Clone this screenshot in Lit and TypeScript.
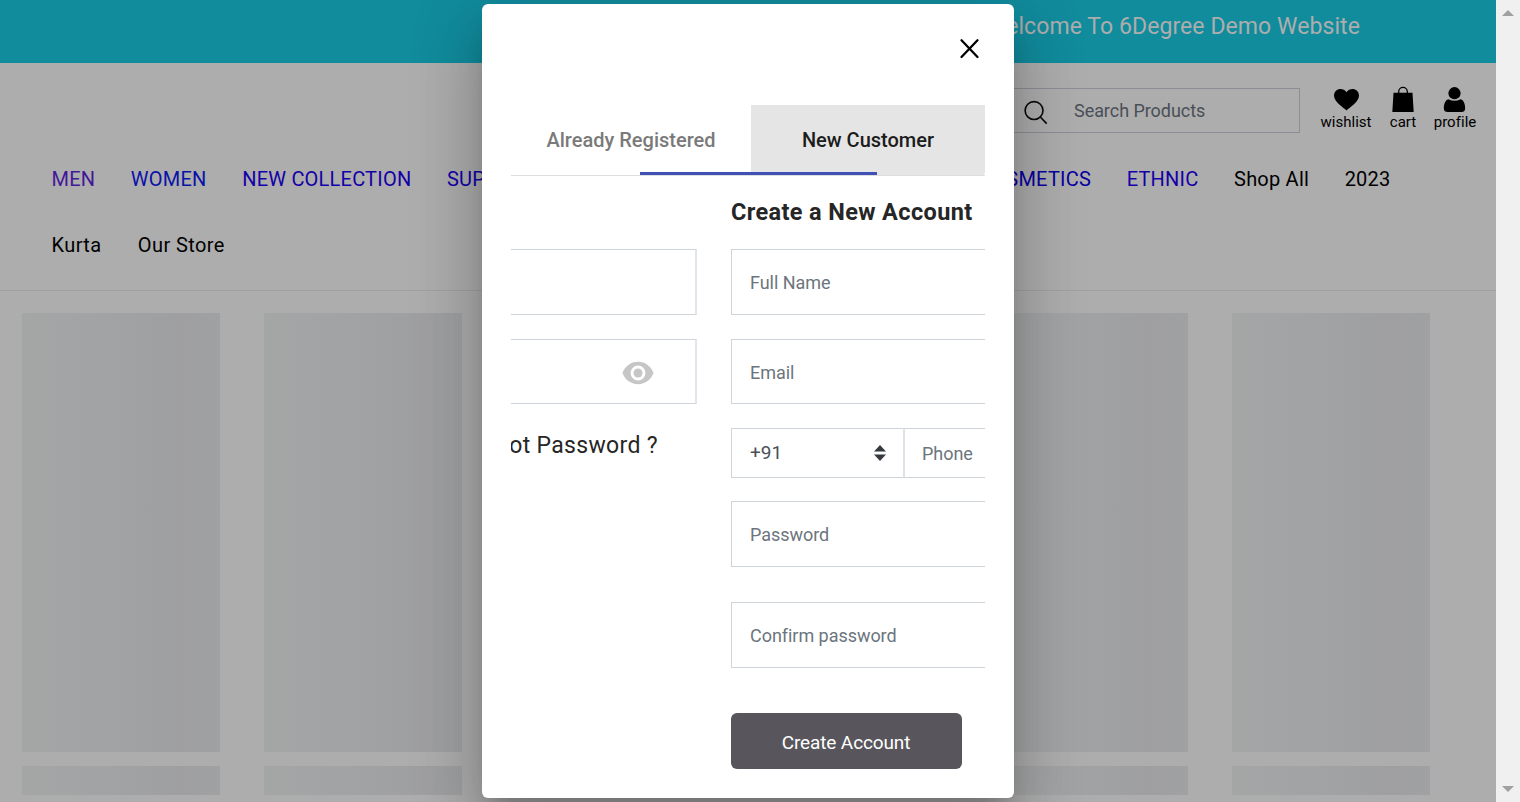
import { LitElement, html, css } from "lit";
import { customElement } from "lit/decorators.js";

@customElement("shop-header")
class ShopHeader extends LitElement {
  static styles = css`
    :host { display: block; }
    .promo { height: 63px; background: #118c9d; color: #adadad; box-sizing: border-box; padding: 11px 136px 0 0; text-align: right; font-size: 23px; line-height: 31px; letter-spacing: 0.08px; }
    .tools { height: 83px; display: flex; justify-content: flex-end; align-items: flex-start; padding-right: 20px; }
    .search { box-sizing: border-box; width: 400px; height: 45px; margin: 25px 20px 0 0; border: 1px solid #8b8e94; display: flex; align-items: center; padding-left: 122px; color: #4a4f57; font-size: 18px; letter-spacing: -0.05px; }
    .search svg { margin-right: 26px; margin-top: 3px; }
    .tool { display: flex; flex-direction: column; align-items: center; font-size: 15px; line-height: 18px; letter-spacing: 0.03px; color: #000; margin-top: 22px; }
    .wish { width: 52px; margin-right: 18px; }
    .cart { width: 26px; margin-right: 18px; }
    .user { width: 42px; }
    nav { height: 144px; border-bottom: 1px solid #a0a0a0; box-sizing: content-box; font-size: 20px; letter-spacing: 0.22px; line-height: 66px; color: #000; }
    .row { display: flex; height: 66px; padding: 0 105.500px 0 51.500px; white-space: nowrap; gap: 35.600px; }
    .push { margin-left: auto; }
    .visited { color: #421899; }
    .blue { color: #0a12a8; }
    .link { color: #1400a8; }
    .deep { color: #0800a0; }
    .plain { letter-spacing: 0.4px; gap: 36.300px; }
  `;
  render() {
    return html`
      <div class="promo">Welcome To 6Degree Demo Website</div>
      <div class="tools">
        <div class="search">
          <svg width="25" height="25" viewBox="0 0 26 26" fill="none" stroke="#0a0a0a" stroke-width="1.700"><circle cx="11.500" cy="11" r="9.300"/><path d="M18 17.700 24.600 24.500"/></svg>
          <span>Search Products</span>
        </div>
        <div class="tool wish">
          <svg width="28" height="28" viewBox="0 0 28 28"><path d="M14.500 25.500C12 23 2 17 2 10.800C2 3.200 11 1.800 14.500 7.200C18 1.800 27 3.200 27 10.800C27 17 17 23 14.500 25.500Z"/></svg>
          <span>wishlist</span>
        </div>
        <div class="tool cart">
          <svg width="26" height="28" viewBox="0 0 26 28"><path d="M3.500 7.800h19L23.700 27H2.300Z"/><path d="M8.700 9V6.700a4.300 4.300 0 0 1 8.600 0V9" fill="none" stroke="#000" stroke-width="1.300"/></svg>
          <span>cart</span>
        </div>
        <div class="tool user">
          <svg width="26" height="28" viewBox="0 0 26 28"><circle cx="12.500" cy="8.200" r="6.100"/><path d="M6.300 14.200Q12.500 17.200 18.700 14.200C22 15 23.500 20 23.100 24Q22.800 27 19.500 27H5.500Q2.200 27 1.900 24C1.500 20 3 15 6.300 14.200Z"/></svg>
          <span>profile</span>
        </div>
      </div>
      <nav>
        <div class="row">
          <span class="visited">MEN</span><span class="blue">WOMEN</span><span class="link">NEW COLLECTION</span><span class="link">SUPER</span>
          <span class="deep push">COSMETICS</span><span class="link">ETHNIC</span><span>Shop All</span><span>2023</span>
        </div>
        <div class="row plain"><span>Kurta</span><span>Our Store</span></div>
      </nav>
    `;
  }
}

@customElement("account-dialog")
class AccountDialog extends LitElement {
  static styles = css`
    :host { display: block; box-sizing: border-box; background: #fff; border-radius: 6px; padding: 0 29px; color: #262626;
      box-shadow: 0 16px 22px -10px rgba(0,0,0,.2), 0 36px 57px 4px rgba(0,0,0,.14), 0 14px 69px 12px rgba(0,0,0,.12); }
    .top { height: 101px; display: flex; justify-content: flex-end; box-sizing: border-box; padding: 34px 5px 0 0; }
    .tabs { height: 70px; display: grid; grid-template-columns: 240px 234px; border-bottom: 1px solid #dedede; font-size: 20px; font-weight: 500; letter-spacing: 0; position: relative; }
    .tab { display: flex; align-items: center; justify-content: center; color: #7a7a7a; }
    .on { background: #e5e5e5; color: #1c1c1c; border-radius: 0 0 3px 0; }
    .ink { position: absolute; left: 129px; bottom: 0; width: 237px; height: 3px; background: #3f51b5; }
    .body { display: grid; grid-template-columns: 186px 254px; column-gap: 34px; overflow: hidden; height: 610px; }
    .col { display: flex; flex-direction: column; min-width: 0; }
    .title { height: 73px; line-height: 73px; font-size: 23.500px; font-weight: 700; letter-spacing: 0.37px; white-space: nowrap; }
    .field { box-sizing: border-box; height: 66px; border: 1px solid #ced4da; border-right: 0; padding: 0 0 0 18px; display: flex; align-items: center; color: #6c757d; font-size: 18px; letter-spacing: -0.04px; margin-bottom: 24px; }
    .old { border-left: 0; border-right: 2px solid #e2e6ea; justify-content: flex-end; padding-right: 41px; }
    .mail { height: 65px; padding-top: 2px; }
    .phone { display: flex; height: 50px; margin-bottom: 23px; box-sizing: border-box; }
    .phone .field { height: 50px; margin: 0; }
    .phone .code { width: 172px; color: #495057; justify-content: space-between; padding: 0 17px 0 18px; font-size: 19px; }
    .code span { margin-top: -2px; }
    .phone .num { flex: 1; border-left: 2px solid #dee2e6; padding-left: 17px; }
    .pass { margin-bottom: 35px; }
    .confirm { margin-bottom: 45px; }
    .forgot { display: flex; justify-content: flex-end; padding: 1px 39px 0 0; font-size: 23px; line-height: 34px; letter-spacing: 0.33px; white-space: nowrap; }
    .create { width: 231px; height: 56px; border: 0; border-radius: 6px; background: #58565c; color: #fff; font: 19px Roboto, sans-serif; letter-spacing: -0.12px; padding: 3px 1px 0 0; }
  `;
  render() {
    return html`
      <div class="top"><svg width="22" height="22" viewBox="0 0 22 22" fill="none" stroke="#000" stroke-width="2.300" stroke-linecap="round"><path d="M3.500 2.300 19.500 19M19.500 2.300 3.500 19"/></svg></div>
      <div class="tabs"><div class="tab">Already Registered</div><div class="tab on">New Customer</div><div class="ink"></div></div>
      <div class="body">
        <div class="col">
          <div class="title"></div>
          <div class="field old"></div>
          <div class="field old mail"><svg width="32" height="24" viewBox="0 0 32 24"><path fill="#c6c6c6" fill-rule="evenodd" d="M16 .8C8.700.8 2.800 5.500.500 12 2.800 18.500 8.700 23.200 16 23.200S29.200 18.500 31.500 12C29.200 5.500 23.300.8 16 .8ZM16 4.600a7.400 7.400 0 1 1 0 14.800 7.400 7.400 0 0 1 0-14.800Z"/><circle cx="16" cy="12" r="4.500" fill="#c6c6c6"/></svg></div>
          <div class="forgot">ot Password ?</div>
        </div>
        <div class="col">
          <div class="title">Create a New Account</div>
          <div class="field">Full Name</div>
          <div class="field mail">Email</div>
          <div class="phone">
            <div class="field code"><span>+91</span><svg width="12" height="16" viewBox="0 0 12 16" fill="#343a40"><path d="M0 6.500 6 0l6 6.500ZM0 9.500 6 16l6-6.500Z"/></svg></div>
            <div class="field num">Phone</div>
          </div>
          <div class="field pass">Password</div>
          <div class="field confirm">Confirm password</div>
          <button class="create">Create Account</button>
        </div>
      </div>
    `;
  }
}

@customElement("app-root")
class AppRoot extends LitElement {
  static styles = css`
    :host { display: block; position: relative; width: 1520px; height: 802px; overflow: hidden; font-family: Roboto, sans-serif; }
    .window { display: grid; grid-template-columns: 1496px 24px; height: 802px; }
    .page { background: #adadad; overflow: hidden; position: relative; }
    .cards { display: grid; grid-template-columns: repeat(6, 198px); column-gap: 44px; padding: 22px 0 0 22px; }
    .card { display: flex; flex-direction: column; gap: 14px; }
    .image, .caption { background: linear-gradient(90deg, #a4a6a6 0%, #a0a2a4 50%, #9f9fa1 80%, #a0a1a3 100%); }
    .image { height: 439px; }
    .caption { height: 29px; }
    .dialog { position: absolute; left: 482px; top: 4px; width: 532px; height: 794px; }
    .scroll { background: #f0f0f0; display: flex; flex-direction: column; justify-content: space-between; align-items: center; padding: 10px 0 10px; box-sizing: border-box; }
  `;
  render() {
    return html`
      <div class="window">
        <div class="page">
          <shop-header></shop-header>
          <div class="cards">${[0, 1, 2, 3, 4, 5].map(() => html`<div class="card"><div class="image"></div><div class="caption"></div></div>`)}</div>
          <account-dialog class="dialog"></account-dialog>
        </div>
        <div class="scroll">
          <svg width="12" height="6" viewBox="0 0 12 6" fill="#a0a0a0"><path d="M0 6 6 0l6 6Z"/></svg>
          <svg width="12" height="6" viewBox="0 0 12 6" fill="#a0a0a0"><path d="M0 0 6 6l6-6Z"/></svg>
        </div>
      </div>
    `;
  }
}
